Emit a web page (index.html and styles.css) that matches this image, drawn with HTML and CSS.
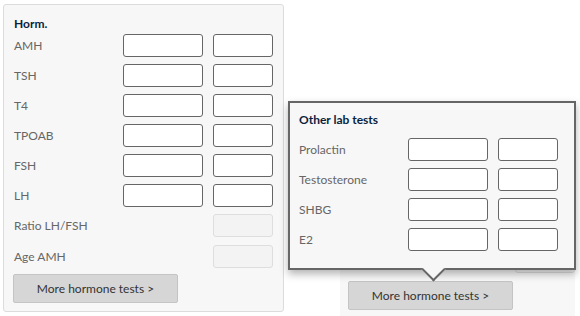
FILE: index.html
```html
<!DOCTYPE html>
<html lang="en">

<head>
    <meta charset="UTF-8">
    <meta name="viewport" content="width=device-width, initial-scale=1.0">
    <title>Lab tests</title>
    <link rel="stylesheet" href="styles.css">
</head>

<body>
    <div class="page">
        <!-- hormone panel -->
        <div class="panel">
            <h3 class="panel-title">Horm.</h3>
            <div class="row"><label>AMH</label><input class="val"><input class="unit"></div>
            <div class="row"><label>TSH</label><input class="val"><input class="unit"></div>
            <div class="row"><label>T4</label><input class="val"><input class="unit"></div>
            <div class="row"><label>TPOAB</label><input class="val"><input class="unit"></div>
            <div class="row"><label>FSH</label><input class="val"><input class="unit"></div>
            <div class="row"><label>LH</label><input class="val"><input class="unit"></div>
            <div class="row"><label>Ratio LH/FSH</label><span class="spacer"></span><input class="unit" disabled></div>
            <div class="row row-last"><label>Age AMH</label><span class="spacer"></span><input class="unit" disabled></div>
            <button class="more-btn">More hormone tests &gt;</button>
        </div>

        <!-- same panel, popover opened -->
        <div class="crop">
            <div class="backdrop">
                <div class="row"><label></label><span class="spacer"></span><input class="unit" disabled></div>
                <button class="more-btn">More hormone tests &gt;</button>
            </div>

            <div class="popover">
                <h3 class="popover-title">Other lab tests</h3>
                <div class="row"><label>Prolactin</label><input class="val"><input class="unit"></div>
                <div class="row"><label>Testosterone</label><input class="val"><input class="unit"></div>
                <div class="row"><label>SHBG</label><input class="val"><input class="unit"></div>
                <div class="row row-last"><label>E2</label><input class="val"><input class="unit"></div>
                <span class="arrow"></span>
            </div>
        </div>
    </div>
</body>

</html>
```

FILE: styles.css
```css
body {
    margin: 0;
    background-color: #fff;
    font-family: Lato, "Liberation Sans", sans-serif;
    font-size: 12px;
    color: #666;
}

.page {
    display: flex;
    align-items: flex-start;
    padding: 4px 0 0 3px;
}

.panel {
    width: 259px;
    padding: 10px 10px 8px 10px;
    background-color: #f7f7f7;
    border: 1px solid #dcdcdc;
    border-radius: 3px;
}

.panel-title,
.popover-title {
    margin: 0;
    font-size: 12px;
    line-height: 18px;
    font-weight: bold;
    color: #0b1f40;
}

.panel-title {
    margin-bottom: 1px;
}

.popover-title {
    margin-bottom: 9px;
}

.row {
    display: flex;
    align-items: center;
    height: 23px;
    margin-bottom: 7px;
}

.row label {
    width: 109px;
}

.val,
.unit,
.spacer {
    box-sizing: border-box;
    height: 23px;
    margin: 0;
    padding: 0 4px;
    border: 1px solid #666;
    border-radius: 3px;
    background-color: #fff;
}

.val {
    width: 80px;
    margin-right: 10px;
}

.unit {
    width: 60px;
}

.spacer {
    width: 80px;
    margin-right: 10px;
    border: none;
    background: none;
}

.unit:disabled {
    border-color: #dedede;
    background-color: #f3f3f3;
}

.row-last {
    margin-top: 8px;
}

.popover .row-last {
    margin-top: 0;
    margin-bottom: 0;
}

.more-btn {
    display: block;
    width: 165px;
    height: 29px;
    margin: -1px 0 0 -1px;
    padding: 0;
    background-color: #d6d6d6;
    border: 1px solid #c4c4c4;
    border-radius: 2px;
    font-family: Lato, "Liberation Sans", sans-serif;
    font-size: 12px;
    color: #333;
}

/* right part: clipped copy of the panel with the popover open */
.crop {
    position: relative;
    width: 287px;
    height: 215px;
    margin: 97px 0 0 4px;
}

.backdrop {
    box-sizing: border-box;
    width: 235px;
    height: 215px;
    margin-left: 52px;
    padding: 149px 0 0 0;
    background-color: #f7f7f7;
    overflow: hidden;
}

.backdrop .row {
    margin-left: -2px;
    margin-bottom: 9px;
}

.backdrop .more-btn {
    margin-left: 8px;
}

.popover {
    position: absolute;
    left: 0;
    top: 0;
    width: 261px;
    padding: 8px 14px 17px 9px;
    background-color: #f7f7f7;
    border: 2px solid #666;
    box-shadow: 0 4px 8px rgba(0, 0, 0, 0.3);
}

.arrow {
    position: absolute;
    left: 135px;
    bottom: -10px;
    width: 15px;
    height: 15px;
    background-color: #f7f7f7;
    border-right: 2px solid #666;
    border-bottom: 2px solid #666;
    transform: rotate(45deg);
}
```
